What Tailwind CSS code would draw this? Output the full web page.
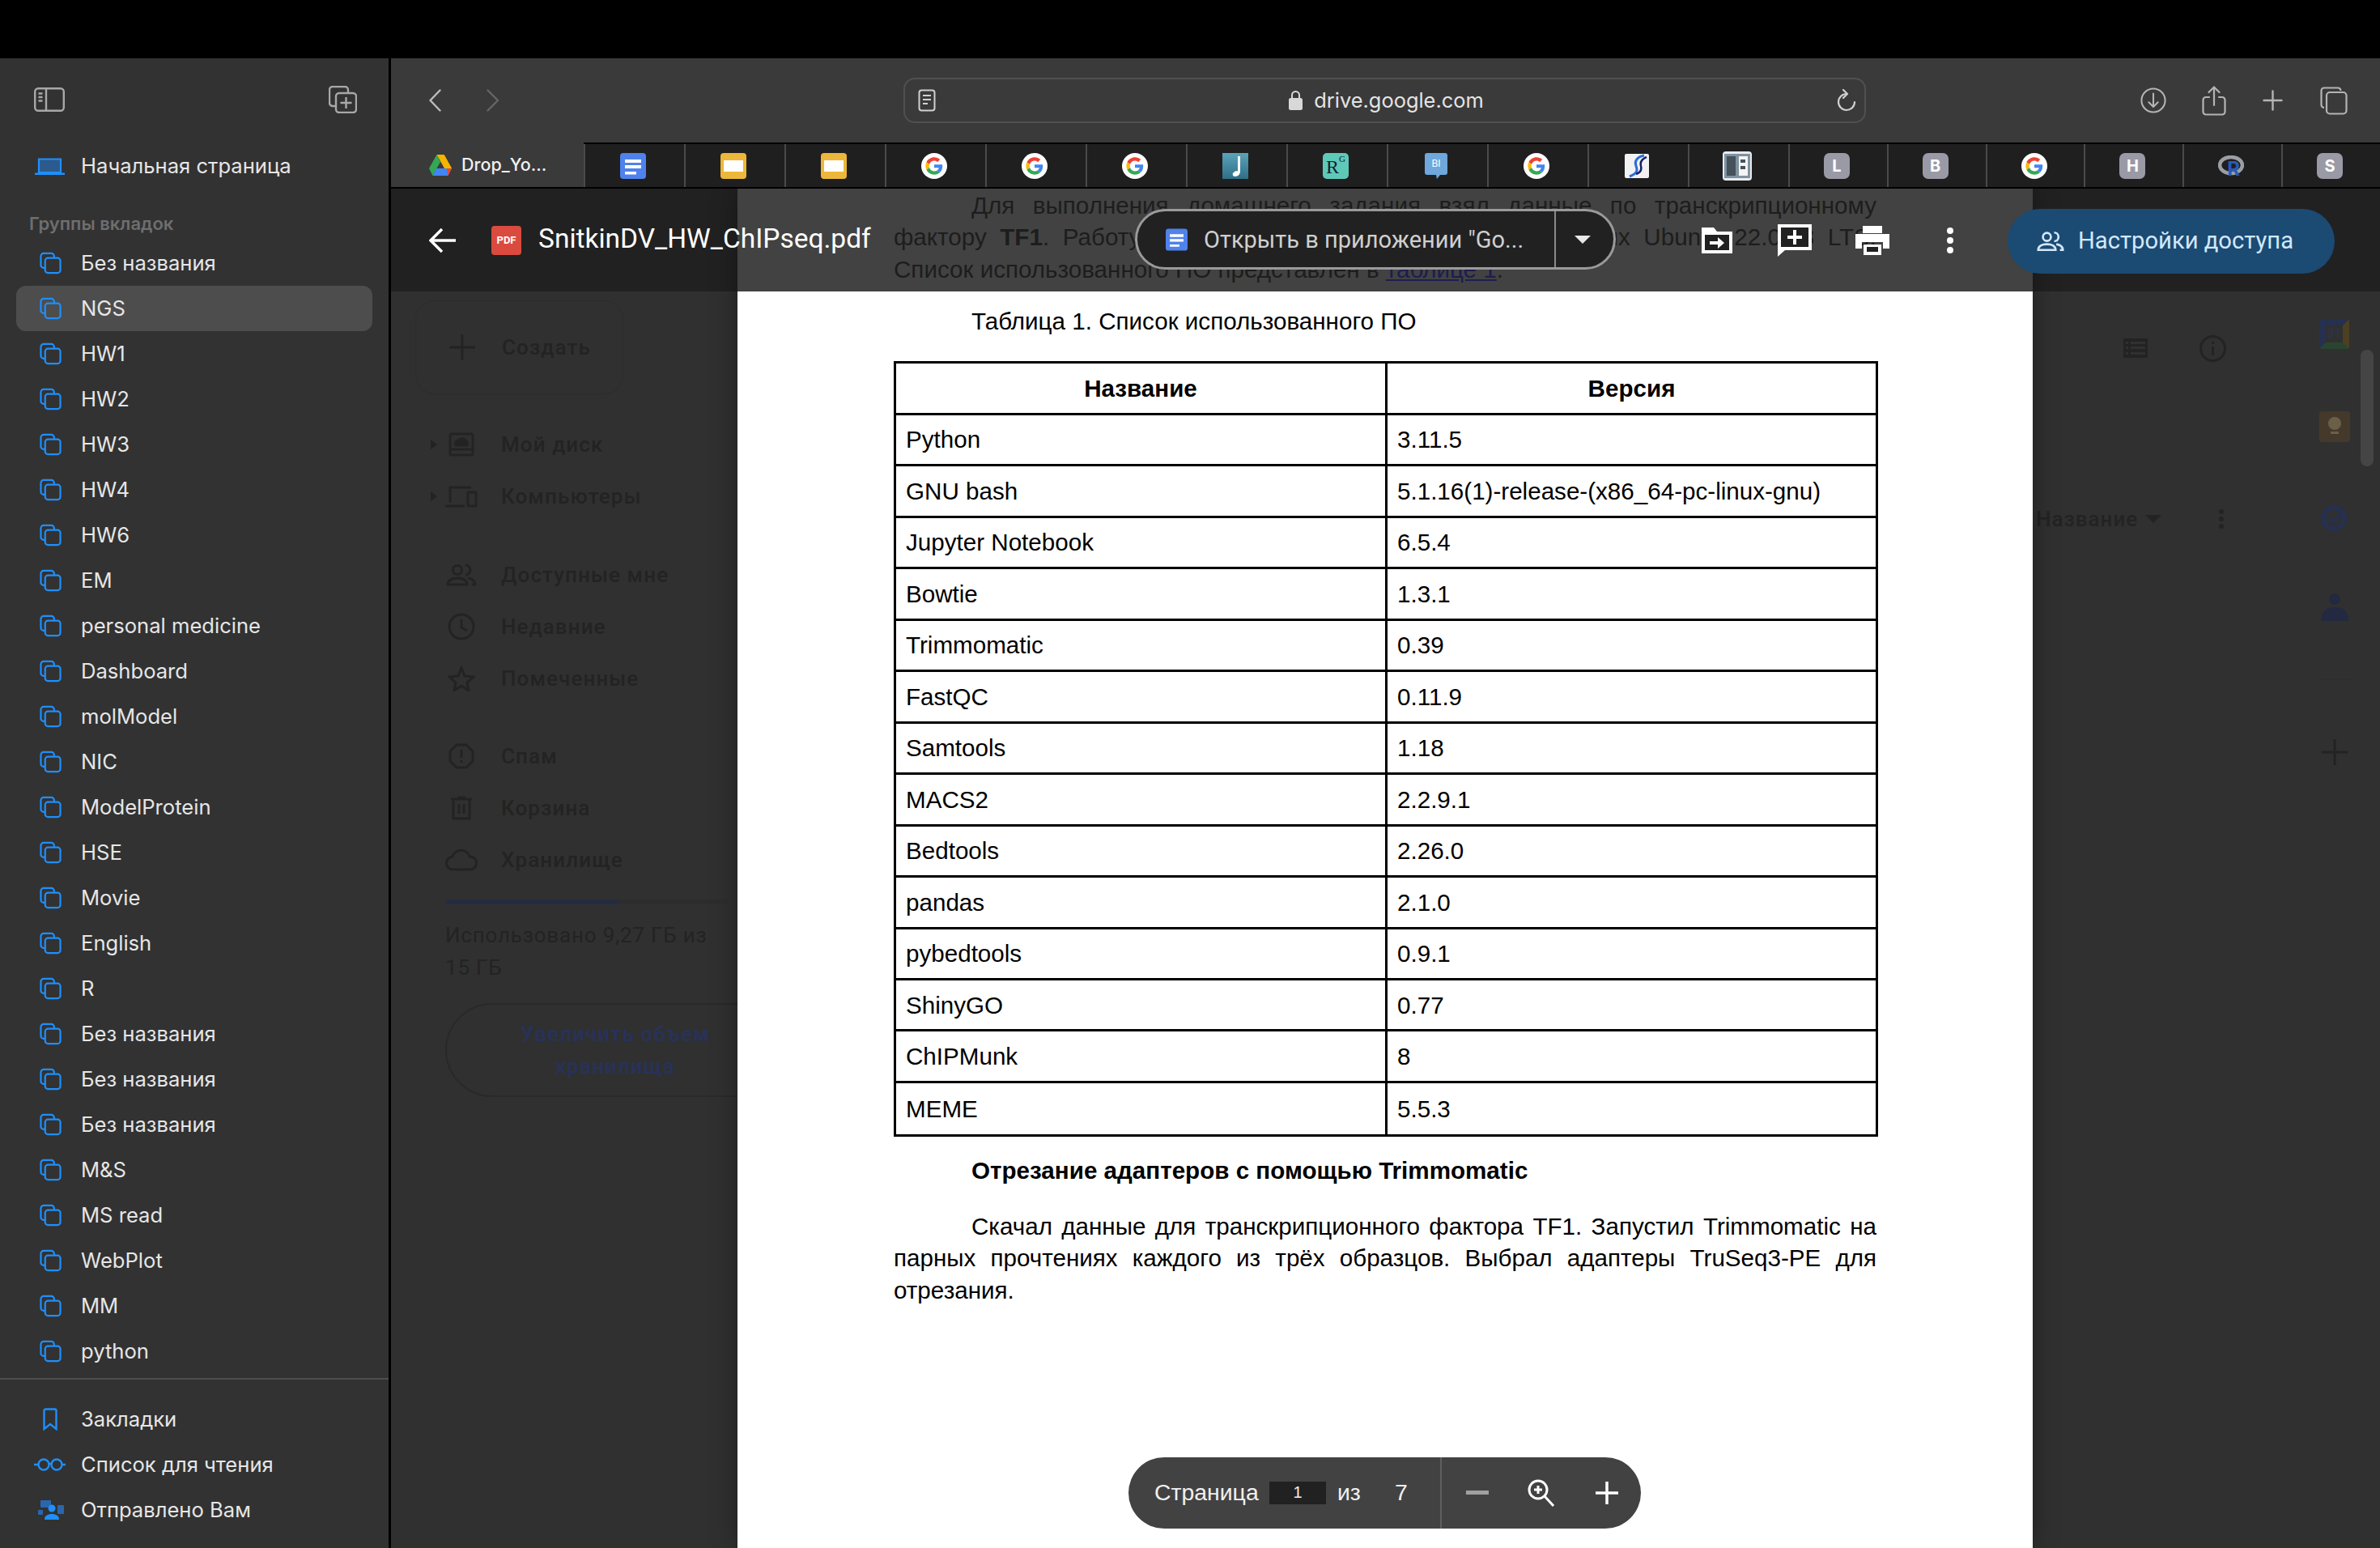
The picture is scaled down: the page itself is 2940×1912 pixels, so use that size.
<!DOCTYPE html><html lang="en">
<head>
  <meta charset="UTF-8" />
  <title>SnitkinDV_HW_ChIPseq.pdf</title>
  <script src="https://cdn.jsdelivr.net/npm/@tailwindcss/browser@4"></script>
</head>
<body class="bg-black h-screen overflow-hidden flex flex-col font-['Inter',sans-serif]">
  <svg class="hidden">
    <symbol id="g" viewBox="-12 -12 72 72">
      <circle cx="24" cy="24" r="36" fill="#fff"/>
      <path fill="#EA4335" d="M24 9.5c3.54 0 6.71 1.22 9.21 3.6l6.85-6.85C35.9 2.38 30.47 0 24 0 14.62 0 6.51 5.38 2.56 13.22l7.98 6.19C12.43 13.72 17.74 9.5 24 9.5z"/>
      <path fill="#4285F4" d="M46.98 24.55c0-1.57-.15-3.09-.38-4.55H24v9.02h12.94c-.58 2.96-2.26 5.48-4.78 7.18l7.73 6c4.51-4.18 7.09-10.36 7.09-17.65z"/>
      <path fill="#FBBC05" d="M10.53 28.59c-.48-1.45-.76-2.99-.76-4.59s.27-3.14.76-4.59l-7.98-6.19C.92 16.46 0 20.12 0 24c0 3.88.92 7.54 2.56 10.78l7.97-6.19z"/>
      <path fill="#34A853" d="M24 48c6.48 0 11.93-2.13 16.02-5.81l-7.73-6c-2.15 1.45-4.92 2.3-8.29 2.3-6.26 0-11.57-4.22-13.47-9.91l-7.98 6.19C6.51 42.62 14.62 48 24 48z"/>
    </symbol>
    <symbol id="docs" viewBox="0 0 32 32">
      <rect width="32" height="32" rx="4" fill="#4f82ec"/>
      <path d="M6 8h20v4H6zM6 15h20v4H6zM6 23h14v3.500H6z" fill="#fff"/>
    </symbol>
    <symbol id="slides" viewBox="0 0 32 32">
      <rect width="32" height="32" rx="4" fill="#ecb73a"/>
      <rect x="4" y="9" width="24" height="14" fill="#fff"/>
    </symbol>
    <symbol id="group" viewBox="0 0 28 28">
      <path d="M7 20H5a3.500 3.500 0 0 1-3.500-3.500V5A3.500 3.500 0 0 1 5 1.500h10A3.500 3.500 0 0 1 18.500 5v2" fill="none" stroke="currentColor" stroke-width="2.300"/>
      <rect x="7" y="7.500" width="19.500" height="19" rx="3.500" fill="none" stroke="currentColor" stroke-width="2.300"/>
    </symbol>
  </svg>

  <!-- black strip above the window -->
  <div class="h-[72px] shrink-0 bg-black"></div>

  <div class="flex-1 flex min-h-0">
    <!-- Safari sidebar -->
    <aside class="w-[480px] shrink-0 bg-[#323232] flex flex-col text-[25.6px] text-[#e6e6e6]">
      <div class="flex justify-between pt-[34px] pl-[42px] pr-[39px] h-[68px]">
        <svg class="mt-[2px] w-[38px] h-[30px] text-[#a8a8a8]" viewBox="0 0 38 30" fill="none" stroke="currentColor" stroke-width="2.400">
          <rect x="1.200" y="1.200" width="35.600" height="27.600" rx="4"/>
          <path d="M15 1.200v27.600M5.500 7.500h5M5.500 12h5M5.500 16.500h5"/>
        </svg>
        <svg class="w-[35px] h-[34px] text-[#a8a8a8]" viewBox="0 0 35 34" fill="none" stroke="currentColor" stroke-width="2.400">
          <path d="M8 25H5a4 4 0 0 1-4-4V5a4 4 0 0 1 4-4h15a4 4 0 0 1 4 4v4"/>
          <rect x="9" y="9" width="25" height="24" rx="4"/>
          <path d="M21.500 14v14M14.500 21h14"/>
        </svg>
      </div>
      <div class="mt-[37px] h-[56px] flex items-center pl-[43px]">
        <svg class="w-[37px] h-[21px] shrink-0" viewBox="0 0 37 21">
          <path d="M5 1.500h27V18H5z" fill="#2c5a8c" stroke="#1e8ffb" stroke-width="2.200"/>
          <path d="M0 18.500h37V21H0z" fill="#1e8ffb"/>
        </svg>
        <span class="ml-[20px]">Начальная страница</span>
      </div>
      <div class="mt-[28px] h-[30px] leading-[30px] pl-[36px] text-[22px] font-semibold text-[#6e6e6e]">Группы вкладок</div>
      <div id="groups" class="mt-[6px] mx-[20px]"></div>
      <div class="mt-[5px] h-[2px] bg-[#4e4e4e]"></div>
      <div class="mt-[21px] flex flex-col">
        <div class="h-[56px] flex items-center pl-[53px]">
          <svg class="w-[18px] h-[28px] shrink-0" viewBox="0 0 18 28" fill="none" stroke="#1e8ffb" stroke-width="2.400"><path d="M1.500 26V3.500a2 2 0 0 1 2-2h11a2 2 0 0 1 2 2V26L9 20z"/></svg>
          <span class="ml-[29px]">Закладки</span>
        </div>
        <div class="h-[56px] flex items-center pl-[42px]">
          <svg class="w-[39px] h-[16px] shrink-0" viewBox="0 0 39 16" fill="none" stroke="#1e8ffb" stroke-width="2.400"><circle cx="12" cy="8" r="6.500"/><circle cx="28" cy="8" r="6.500"/><path d="M18.500 7h3M0 8h5.500M34 8h5"/></svg>
          <span class="ml-[19px]">Список для чтения</span>
        </div>
        <div class="h-[56px] flex items-center pl-[47px]">
          <svg class="w-[32px] h-[24px] shrink-0" viewBox="0 0 32 24">
            <rect x="3" y="0" width="13" height="9" rx="1" fill="#2a66ad"/><rect x="24" y="6" width="8" height="11" rx="1" fill="#2a66ad"/><rect x="0" y="12" width="6" height="6" rx="1" fill="#2a66ad"/>
            <circle cx="17" cy="10" r="4.500" fill="#1e8ffb"/><path d="M8 24c0-5 4-7 9-7s9 2 9 7z" fill="#1e8ffb"/>
          </svg>
          <span class="ml-[21px]">Отправлено Вам</span>
        </div>
      </div>
    </aside>
    <div class="w-[3px] shrink-0 bg-black"></div>

    <div class="flex-1 min-w-0 flex flex-col">
      <!-- Safari toolbar -->
      <div class="h-[104px] shrink-0 bg-[#3a3a3a] flex items-center pl-[47px] text-[#b4b4b4]">
        <svg class="w-[15px] h-[28px] shrink-0" viewBox="0 0 15 28" fill="none" stroke="#bdbdbd" stroke-width="2.400" stroke-linecap="round" stroke-linejoin="round"><path d="M13.500 1.500 1.500 14l12 12.500"/></svg>
        <svg class="ml-[56px] w-[16px] h-[28px] shrink-0" viewBox="0 0 16 28" fill="none" stroke="#666" stroke-width="2.400" stroke-linecap="round" stroke-linejoin="round"><path d="M1.500 1.500 14 14 1.500 26.500"/></svg>
        <div class="ml-[499px] w-[1189px] h-[56px] shrink-0 rounded-[14px] border-2 border-[#505050] flex items-center pl-[16px] pr-[10px]">
          <svg class="w-[22px] h-[28px] shrink-0" viewBox="0 0 22 28" fill="none" stroke="#d0d0d0" stroke-width="2"><rect x="1.500" y="1.500" width="19" height="25" rx="3"/><path d="M6 8h10M6 13h10M6 18h6"/></svg>
          <div class="flex-1 flex items-center justify-center">
            <svg class="w-[17px] h-[25px] shrink-0" viewBox="0 0 17 25"><path d="M4 11V6.500a4.500 4.500 0 0 1 9 0V11" fill="none" stroke="#d8d8d8" stroke-width="2"/><rect y="10" width="17" height="15" rx="2.500" fill="#d8d8d8"/></svg>
            <span class="ml-[14px] text-[25.400px] text-[#e4e4e4]">drive.google.com</span>
          </div>
          <svg class="w-[24px] h-[28px] shrink-0" viewBox="0 0 24 28" fill="none" stroke="#d0d0d0" stroke-width="2.200" stroke-linecap="round" stroke-linejoin="round"><path d="M12 6A10 10 0 1 0 22 16"/><path d="M8 1l5 5-5 5"/></svg>
        </div>
        <svg class="ml-[339px] w-[32px] h-[34px] shrink-0" viewBox="0 0 34 34" fill="none" stroke="currentColor" stroke-width="2.200" stroke-linecap="round" stroke-linejoin="round"><circle cx="17" cy="17" r="15.500"/><path d="M17 8v17M11 19.500l6 6 6-6"/></svg>
        <svg class="ml-[44px] w-[30px] h-[37px] shrink-0" viewBox="0 0 30 37" fill="none" stroke="currentColor" stroke-width="2.200" stroke-linecap="round" stroke-linejoin="round"><path d="M9 14H5a3.500 3.500 0 0 0-3.500 3.500V32A3.500 3.500 0 0 0 5 35.500h20a3.500 3.500 0 0 0 3.500-3.500V17.500A3.500 3.500 0 0 0 25 14h-4"/><path d="M15 24V1.500M8.500 8 15 1.500 21.500 8"/></svg>
        <svg class="ml-[45px] w-[25px] h-[26px] shrink-0" viewBox="0 0 25 26" fill="none" stroke="currentColor" stroke-width="2.400" stroke-linecap="round"><path d="M12.500 1.500v23M1.500 13h22"/></svg>
        <svg class="ml-[46px] w-[34px] h-[35px] shrink-0" viewBox="0 0 34 35" fill="none" stroke="currentColor" stroke-width="2.200"><path d="M5 26a3.500 3.500 0 0 1-3.500-3.500V5A3.500 3.500 0 0 1 5 1.500h17A3.500 3.500 0 0 1 25.500 5"/><rect x="8" y="7" width="24.500" height="26.500" rx="4"/></svg>
      </div>

      <!-- Safari tab bar -->
      <div class="h-[57px] shrink-0 flex border-b-2 border-black">
        <div class="w-[238px] shrink-0 bg-[#3a3a3a] flex items-center pl-[47px]">
          <svg class="w-[28px] h-[26px] shrink-0" viewBox="0 0 28 26">
            <path d="M9.500 0h9L28 17h-9z" fill="#f4b400"/><path d="M9.500 0 0 17l4.500 9L14 9z" fill="#34a853"/><path d="M4.500 26h19L28 17H9z" fill="#4285f4"/><path d="M18.500 0H14l5 17h9z" fill="#f4b400"/><path d="M23.500 26 28 17h-6z" fill="#ea4335"/>
          </svg>
          <span class="ml-[12px] text-[21.500px] font-medium text-[#f0f0f0] whitespace-nowrap">Drop_Yo...</span>
        </div>
        <div class="flex-1 flex border-t-2 border-black bg-[#1f1f1f]">
          <div class="w-[124px] shrink-0 pr-[4px] flex items-center justify-center border-l-2 border-[#4a4a4a]"><svg class="w-[32px] h-[32px]"><use href="#docs"/></svg></div>
          <div class="w-[124px] shrink-0 pr-[4px] flex items-center justify-center border-l-2 border-[#4a4a4a]"><svg class="w-[32px] h-[32px]"><use href="#slides"/></svg></div>
          <div class="w-[124px] shrink-0 pr-[4px] flex items-center justify-center border-l-2 border-[#4a4a4a]"><svg class="w-[32px] h-[32px]"><use href="#slides"/></svg></div>
          <div class="w-[124px] shrink-0 pr-[4px] flex items-center justify-center border-l-2 border-[#4a4a4a]"><svg class="w-[32px] h-[32px]"><use href="#g"/></svg></div>
          <div class="w-[124px] shrink-0 pr-[4px] flex items-center justify-center border-l-2 border-[#4a4a4a]"><svg class="w-[32px] h-[32px]"><use href="#g"/></svg></div>
          <div class="w-[124px] shrink-0 pr-[4px] flex items-center justify-center border-l-2 border-[#4a4a4a]"><svg class="w-[32px] h-[32px]"><use href="#g"/></svg></div>
          <div class="w-[124px] shrink-0 pr-[4px] flex items-center justify-center border-l-2 border-[#4a4a4a]">
            <svg class="w-[32px] h-[32px]" viewBox="0 0 32 32"><defs><linearGradient id="m" x1="0" y1="0" x2="0" y2="1"><stop offset="0" stop-color="#5ba3bb"/><stop offset="1" stop-color="#2f6f86"/></linearGradient></defs><rect width="32" height="32" fill="url(#m)"/><path d="M19 4h3v19c0 3-3 6-6 6-2.500 0-4-1.500-3-4 1-2 4-3 6-2.500z" fill="#fff"/></svg>
          </div>
          <div class="w-[124px] shrink-0 pr-[4px] flex items-center justify-center border-l-2 border-[#4a4a4a]">
            <div class="w-[32px] h-[32px] rounded-[5px] bg-[#5fc9b8] flex justify-center text-[#123] font-['Liberation_Serif',serif] text-[24px] leading-[34px]">R<span class="text-[11px] leading-[14px]">G</span></div>
          </div>
          <div class="w-[124px] shrink-0 pr-[4px] flex items-center justify-center border-l-2 border-[#4a4a4a] relative">
            <svg class="w-[28px] h-[32px] absolute" viewBox="0 0 28 32"><path d="M3 0h22a3 3 0 0 1 3 3v21a3 3 0 0 1-3 3h-6l-4 5-1-5H3a3 3 0 0 1-3-3V3a3 3 0 0 1 3-3z" fill="#6ea8dc"/></svg>
            <span class="relative text-[12px] text-white -mt-[6px]">BI</span>
          </div>
          <div class="w-[124px] shrink-0 pr-[4px] flex items-center justify-center border-l-2 border-[#4a4a4a]"><svg class="w-[32px] h-[32px]"><use href="#g"/></svg></div>
          <div class="w-[124px] shrink-0 pr-[4px] flex items-center justify-center border-l-2 border-[#4a4a4a]">
            <svg class="w-[30px] h-[30px]" viewBox="0 0 30 30"><rect width="30" height="30" rx="2" fill="#f2f2f2"/><path d="M24 2C14 4 12 10 14 15s2 9-8 13" fill="none" stroke="#2b6fd6" stroke-width="3"/><path d="M27 4c-7 3-8 7-7 11s0 8-6 10" fill="none" stroke="#17206e" stroke-width="2.500"/></svg>
          </div>
          <div class="w-[124px] shrink-0 pr-[4px] flex items-center justify-center border-l-2 border-[#4a4a4a]">
            <svg class="w-[36px] h-[36px]" viewBox="0 0 36 36"><rect width="36" height="36" rx="4" fill="#e8ecef"/><rect x="2" y="3" width="32" height="30" fill="#7f929f"/><rect x="5" y="6" width="11" height="24" fill="#44525c"/><rect x="20" y="6" width="11" height="24" fill="#f4f4f4"/><path d="M22 10h6v4h-6zM22 18h6v4h-6zM8 10h5v4H8zM8 18h5v4H8z" fill="#44525c"/></svg>
          </div>
          <div class="flex-1 basis-0 pr-[4px] flex items-center justify-center border-l-2 border-[#4a4a4a]"><span class="w-[32px] h-[32px] rounded-[7px] bg-[#9a9aa6] flex items-center justify-center text-white text-[20px] font-bold">L</span></div>
          <div class="flex-1 basis-0 pr-[4px] flex items-center justify-center border-l-2 border-[#4a4a4a]"><span class="w-[32px] h-[32px] rounded-[7px] bg-[#9a9aa6] flex items-center justify-center text-white text-[20px] font-bold">B</span></div>
          <div class="flex-1 basis-0 pr-[4px] flex items-center justify-center border-l-2 border-[#4a4a4a]"><svg class="w-[32px] h-[32px]"><use href="#g"/></svg></div>
          <div class="flex-1 basis-0 pr-[4px] flex items-center justify-center border-l-2 border-[#4a4a4a]"><span class="w-[32px] h-[32px] rounded-[7px] bg-[#9a9aa6] flex items-center justify-center text-white text-[20px] font-bold">H</span></div>
          <div class="flex-1 basis-0 pr-[4px] flex items-center justify-center border-l-2 border-[#4a4a4a] relative">
            <svg class="w-[32px] h-[26px] absolute" viewBox="0 0 32 26"><ellipse cx="16" cy="12" rx="14" ry="10" fill="none" stroke="#9b9ea3" stroke-width="4.500"/></svg>
            <span class="relative text-[24px] leading-[24px] font-bold text-[#2a5bb5] mt-[8px] ml-[6px]">R</span>
          </div>
          <div class="flex-1 basis-0 pr-[4px] flex items-center justify-center border-l-2 border-[#4a4a4a]"><span class="w-[32px] h-[32px] rounded-[7px] bg-[#9a9aa6] flex items-center justify-center text-white text-[20px] font-bold">S</span></div>
        </div>
      </div>

      <!-- Drive page, dimmed behind the PDF preview -->
      <div class="relative flex-1 min-h-0 overflow-hidden bg-[#303030] flex flex-col">
        <div class="h-[127px] shrink-0 bg-[#212121]"></div>
        <div class="flex-1 flex min-h-0 font-['Roboto',sans-serif] text-[26px] font-medium tracking-[1.100px] text-[#232323]">
          <nav class="pt-[11px]">
            <div class="ml-[30px] w-[257px] h-[116px] rounded-[24px] border border-[#2c2c2c] flex items-center pl-[40px]">
              <svg class="w-[34px] h-[34px] shrink-0" viewBox="0 0 34 34" fill="none" stroke="#232323" stroke-width="3"><path d="M17 1v32M1 17h32"/></svg>
              <span class="ml-[32px]">Создать</span>
            </div>
            <div class="mt-[30px]">
              <div class="h-[64px] flex items-center pl-[48px]">
                <svg class="w-[12px] h-[12px] shrink-0" viewBox="0 0 12 12"><path d="M1 0l8 6-8 6z" fill="#232323"/></svg>
                <div class="w-[54px] flex justify-center"><svg class="w-[32px] h-[32px]" viewBox="0 0 32 32" fill="none" stroke="#232323" stroke-width="3"><rect x="2" y="3" width="28" height="26" rx="2"/><path d="M2 22h28" /><path d="M9 17a4 4 0 0 1 3-6 6 6 0 0 1 10 1 3 3 0 0 1 1 5z" fill="#232323"/></svg></div>
                <span class="ml-[22px]">Мой диск</span>
              </div>
              <div class="h-[64px] flex items-center pl-[48px]">
                <svg class="w-[12px] h-[12px] shrink-0" viewBox="0 0 12 12"><path d="M1 0l8 6-8 6z" fill="#232323"/></svg>
                <div class="w-[54px] flex justify-center"><svg class="w-[40px] h-[28px]" viewBox="0 0 40 28" fill="none" stroke="#232323" stroke-width="3"><path d="M6 22V3h26M0 26h24"/><rect x="28" y="9" width="10" height="17" rx="1"/></svg></div>
                <span class="ml-[22px]">Компьютеры</span>
              </div>
            </div>
            <div class="mt-[33px]">
              <div class="h-[64px] flex items-center pl-[60px]">
                <div class="w-[54px] flex justify-center"><svg class="w-[38px] h-[28px]" viewBox="0 0 38 28" fill="none" stroke="#232323" stroke-width="3"><circle cx="14" cy="8" r="5.500"/><path d="M2 26c0-5 5-8 12-8s12 3 12 8z"/><path d="M24 2a6 6 0 0 1 0 12M32 26h4c0-4-3-7-9-8"/></svg></div>
                <span class="ml-[22px]">Доступные мне</span>
              </div>
              <div class="h-[64px] flex items-center pl-[60px]">
                <div class="w-[54px] flex justify-center"><svg class="w-[34px] h-[34px]" viewBox="0 0 34 34" fill="none" stroke="#232323" stroke-width="3"><circle cx="17" cy="17" r="15"/><path d="M17 8v10l7 4"/></svg></div>
                <span class="ml-[22px]">Недавние</span>
              </div>
              <div class="h-[64px] flex items-center pl-[60px]">
                <div class="w-[54px] flex justify-center"><svg class="w-[34px] h-[32px]" viewBox="0 0 34 32" fill="none" stroke="#232323" stroke-width="3"><path d="M17 3l4 10 11 1-8 7 2 10-9-6-9 6 2-10-8-7 11-1z"/></svg></div>
                <span class="ml-[22px]">Помеченные</span>
              </div>
            </div>
            <div class="mt-[32px]">
              <div class="h-[64px] flex items-center pl-[60px]">
                <div class="w-[54px] flex justify-center"><svg class="w-[32px] h-[32px]" viewBox="0 0 32 32" fill="none" stroke="#232323" stroke-width="3"><path d="M10 2h12l8 8v12l-8 8H10l-8-8V10z"/><path d="M16 8v10M16 21v3"/></svg></div>
                <span class="ml-[22px]">Спам</span>
              </div>
              <div class="h-[64px] flex items-center pl-[60px]">
                <div class="w-[54px] flex justify-center"><svg class="w-[26px] h-[30px]" viewBox="0 0 26 30" fill="none" stroke="#232323" stroke-width="3"><path d="M0 4h26M8 2h10M3 4v24h20V4M10 10v12M16 10v12"/></svg></div>
                <span class="ml-[22px]">Корзина</span>
              </div>
              <div class="h-[64px] flex items-center pl-[60px]">
                <div class="w-[54px] flex justify-center"><svg class="w-[40px] h-[28px]" viewBox="0 0 40 28" fill="none" stroke="#232323" stroke-width="3"><path d="M10 26a8 8 0 0 1-1-16 11 11 0 0 1 21 0 8 8 0 0 1 1 16z"/></svg></div>
                <span class="ml-[22px]">Хранилище</span>
              </div>
            </div>
            <div class="mt-[17px] ml-[67px] w-[350px] h-[6px] rounded-full bg-[#2d2d2d]"><div class="w-[214px] h-[6px] rounded-full bg-[#252c42]"></div></div>
            <div class="mt-[18px] ml-[67px] w-[360px] leading-[40px] font-normal tracking-[0.800px]">Использовано 9,27 ГБ из<br>15 ГБ</div>
            <div class="mt-[24px] ml-[67px] w-[420px] h-[116px] rounded-[58px] border-2 border-[#292929] flex items-center justify-center text-center font-semibold leading-[40px] text-[#283258]">Увеличить объем<br>хранилища</div>
          </nav>

          <div class="ml-auto w-[245px] pt-[50px]">
            <div class="h-[40px] flex items-center pl-[108px]">
              <svg class="w-[30px] h-[24px]" viewBox="0 0 30 24"><rect width="30" height="24" fill="#232323"/><path d="M3 4h3v3H3zM9 4h18v3H9zM3 10h3v3H3zM9 10h18v3H9zM3 17h3v3H3zM9 17h18v3H9z" fill="#303030"/></svg>
              <svg class="ml-[64px] w-[33px] h-[33px]" viewBox="0 0 33 33" fill="none" stroke="#232323" stroke-width="3"><circle cx="16.500" cy="16.500" r="15"/><path d="M16.500 14v11M16.500 8v3"/></svg>
            </div>
            <div class="mt-[171px] h-[40px] flex items-center">
              <span class="w-[120px] whitespace-nowrap tracking-[1px]">Название</span>
              <svg class="ml-[15px] w-[20px] h-[10px]" viewBox="0 0 20 10"><path d="M0 0h20L10 10z" fill="#232323"/></svg>
              <svg class="ml-[71px] w-[6px] h-[24px]" viewBox="0 0 6 24" fill="#232323"><circle cx="3" cy="3" r="3"/><circle cx="3" cy="12" r="3"/><circle cx="3" cy="21" r="3"/></svg>
            </div>
          </div>

          <div class="ml-[105px] w-[37px] pt-[34px] flex flex-col items-center">
            <div class="w-[37px] h-[37px] shrink-0 rounded-[2px] border-[8px] border-t-[#26304f] border-l-[#26304f] border-r-[#4d3f22] border-b-[#2a4430] flex items-center justify-center text-[15px] tracking-normal text-[#2a3350]">31</div>
            <svg class="mt-[77px] w-[38px] h-[38px] shrink-0" viewBox="0 0 38 38"><rect width="38" height="38" rx="3" fill="#44392a"/><circle cx="19" cy="15" r="8" fill="#6a5f47"/><rect x="14" y="25" width="10" height="3" fill="#6a5f47"/></svg>
            <svg class="mt-[75px] w-[36px] h-[36px] shrink-0" viewBox="0 0 36 36" fill="none"><circle cx="17" cy="19" r="13" stroke="#26304f" stroke-width="6"/><path d="M10 18l6 6 10-11" stroke="#26304f" stroke-width="4"/></svg>
            <svg class="mt-[76px] w-[34px] h-[34px] shrink-0" viewBox="0 0 34 34" fill="#222940"><circle cx="17" cy="7" r="7"/><path d="M0 34c0-12 6-17 17-17s17 5 17 17z"/></svg>
            <div class="mt-[72px] w-[48px] h-[1px] shrink-0 bg-[#2d2d2d]"></div>
            <svg class="mt-[72px] w-[34px] h-[34px] shrink-0" viewBox="0 0 34 34" fill="none" stroke="#232323" stroke-width="3"><path d="M17 1v32M1 17h32"/></svg>
          </div>
          <div class="ml-[14px] mr-[8px] mt-[72px] w-[16px] h-[144px] rounded-full bg-[#444544]"></div>
        </div>

        <!-- PDF page lying over the Drive page -->
        <div class="absolute top-0 bottom-0 left-[428px] w-[1600px] bg-white shadow-[0_0_30px_rgba(0,0,0,0.35)] font-['Liberation_Sans',sans-serif] text-[29.600px] leading-[39.400px] text-black">
          <div class="h-[127px] overflow-hidden bg-[#424242] text-[#1d1d1d] px-[193px] pt-[1px]">
            <div class="indent-[96px] [text-align-last:justify]">Для выполнения домашнего задания взял данные по транскрипционному</div>
            <div class="[text-align-last:justify]">фактору <b>TF1</b>. Работу выполнял на ноутбуке с системой Linux Ubuntu 22.04.3 LTS.</div>
            <div>Список использованного ПО представлен в <span class="text-[#1d1d50] underline">таблице 1</span>.</div>
          </div>
          <div class="px-[193px]">
            <p class="mt-[17px] pl-[96px]">Таблица 1. Список использованного ПО</p>
            <div id="table" class="mt-[30px] w-[1216px] h-[958px] border-[3px] border-black grid grid-cols-[607px_1fr] grid-rows-[repeat(15,1fr)]"></div>
            <p class="mt-[22px] pl-[96px] font-bold">Отрезание адаптеров с помощью Trimmomatic</p>
            <p class="mt-[29px] indent-[96px] [text-align-last:justify]">Скачал данные для транскрипционного фактора TF1. Запустил Trimmomatic на</p>
            <p class="[text-align-last:justify]">парных прочтениях каждого из трёх образцов. Выбрал адаптеры TruSeq3-PE для</p>
            <p>отрезания.</p>
          </div>
          <!-- page controls -->
          <div class="absolute left-[483px] bottom-[24px] w-[633px] h-[88px] rounded-full bg-[#424242] flex items-center pl-[32px] text-[28.400px] text-[#f0f0f0]">
            <span class="w-[128px] whitespace-nowrap">Страница</span>
            <span class="ml-[14px] w-[70px] h-[28px] bg-[#212121] flex items-center justify-center text-[20px]">1</span>
            <span class="ml-[14px] w-[30px]">из</span>
            <span class="ml-[41px] w-[13px]">7</span>
            <div class="ml-[43px] w-[2px] h-[88px] bg-[#5f5f5f]"></div>
            <svg class="ml-[30px] w-[28px] h-[6px]" viewBox="0 0 28 6"><rect width="28" height="5" fill="#a0a0a0"/></svg>
            <svg class="ml-[48px] w-[34px] h-[34px]" viewBox="0 0 34 34" fill="none" stroke="#fff" stroke-width="3"><circle cx="13" cy="13" r="11"/><path d="M21 21l11 12M13 8v10M8 13h10"/></svg>
            <svg class="ml-[50px] w-[28px] h-[28px]" viewBox="0 0 28 28" fill="none" stroke="#fff" stroke-width="3.500"><path d="M14 0v28M0 14h28"/></svg>
          </div>
        </div>

        <!-- Drive preview header controls -->
        <div class="absolute top-0 left-0 right-0 h-[127px] flex items-center pl-[47px] font-['Roboto',sans-serif]">
          <svg class="w-[33px] h-[32px] shrink-0" viewBox="0 0 33 32" fill="none" stroke="#fff" stroke-width="3.400"><path d="M16 2 2 16l14 14M2 16h31"/></svg>
          <div class="ml-[44px] w-[37px] h-[36px] shrink-0 rounded-[4px] bg-[#db4a3e] flex items-center justify-center text-[13px] font-bold text-white">PDF</div>
          <span class="ml-[21px] w-[411px] shrink-0 whitespace-nowrap text-[33.500px] text-white -mt-[2px]">SnitkinDV_HW_ChIPseq.pdf</span>
          <div class="ml-[326px] w-[594px] h-[75px] shrink-0 rounded-full border-[3px] border-[#9a9a9a] bg-[#212121] flex items-center pl-[35px] -mt-[2px]">
            <svg class="w-[27px] h-[28px] shrink-0"><use href="#docs"/></svg>
            <span class="ml-[20px] mt-[3px] w-[393px] whitespace-nowrap text-[29px] text-[#cfcfcf]">Открыть в приложении "Go...</span>
            <div class="ml-[40px] w-[2px] h-[69px] bg-[#8a8a8a]"></div>
            <svg class="ml-[23px] w-[20px] h-[10px]" viewBox="0 0 20 10"><path d="M0 0h20L10 10z" fill="#e8e8e8"/></svg>
          </div>
          <svg class="ml-[106px] w-[38px] h-[32px] shrink-0" viewBox="0 0 38 32"><path d="M0 0h15l4 5h19v27H0z" fill="#fff"/><rect x="4" y="9" width="30" height="19" fill="#212121"/><path d="M10 17h10v-5l8 7-8 7v-5H10z" fill="#fff"/></svg>
          <svg class="ml-[56px] w-[42px] h-[40px] shrink-0" viewBox="0 0 42 40"><path d="M0 0h42v32H9l-9 8z" fill="#fff"/><path d="M4 4h34v24H4z" fill="#212121"/><path d="M19 7h4v7h7v4h-7v7h-4v-7h-7v-4h7z" fill="#fff"/></svg>
          <svg class="ml-[54px] w-[42px] h-[36px] shrink-0" viewBox="0 0 42 36"><path d="M9 0h24v9H9zM0 10h42v18h-8v-8H8v8H0z" fill="#fff"/><path d="M10 23h22v13H10z" fill="#fff"/><path d="M14 26h14v6H14z" fill="#212121"/></svg>
          <svg class="ml-[71px] w-[8px] h-[32px] shrink-0" viewBox="0 0 8 32" fill="#fff"><circle cx="4" cy="4" r="4"/><circle cx="4" cy="16" r="4"/><circle cx="4" cy="28" r="4"/></svg>
          <div class="ml-[67px] mt-[2px] w-[404px] h-[80px] shrink-0 rounded-full bg-[#1b4a73] flex items-center pl-[36px] text-[29.200px] text-[#d2e8fb]">
            <svg class="w-[34px] h-[26px] shrink-0" viewBox="0 0 38 28" fill="none" stroke="#d2e8fb" stroke-width="3"><circle cx="14" cy="8" r="5.500"/><path d="M2 26c0-5 5-8 12-8s12 3 12 8z"/><path d="M24 2a6 6 0 0 1 0 12M32 26h4c0-4-3-7-9-8"/></svg>
            <span class="ml-[17px] whitespace-nowrap">Настройки доступа</span>
          </div>
        </div>
      </div>
    </div>
  </div>

  <script>
    // sidebar tab groups
    const groups = ["Без названия","NGS","HW1","HW2","HW3","HW4","HW6","EM","personal medicine","Dashboard","molModel","NIC","ModelProtein","HSE","Movie","English","R","Без названия","Без названия","Без названия","M&S","MS read","WebPlot","MM","python"];
    const groupsEl = document.getElementById("groups");
    groups.forEach((name) => {
      const row = document.createElement("div");
      row.className = "h-[56px] flex items-center pl-[29px] rounded-[12px]" + (name === "NGS" ? " bg-[#4d4d4d]" : "");
      row.innerHTML = '<svg class="w-[27px] h-[28px] shrink-0 text-[#1e8ffb]"><use href="#group"/></svg><span class="ml-[24px]"></span>';
      row.querySelector("span").textContent = name;
      groupsEl.appendChild(row);
    });

    // software table in the PDF
    const rows = [["Название","Версия"],["Python","3.11.5"],["GNU bash","5.1.16(1)-release-(x86_64-pc-linux-gnu)"],["Jupyter Notebook","6.5.4"],["Bowtie","1.3.1"],["Trimmomatic","0.39"],["FastQC","0.11.9"],["Samtools","1.18"],["MACS2","2.2.9.1"],["Bedtools","2.26.0"],["pandas","2.1.0"],["pybedtools","0.9.1"],["ShinyGO","0.77"],["ChIPMunk","8"],["MEME","5.5.3"]];
    const tableEl = document.getElementById("table");
    rows.forEach((row, i) => {
      row.forEach((text, j) => {
        const cell = document.createElement("div");
        cell.className = (i === 0 ? "font-bold justify-center " : "pl-[12px] ") + (j === 0 ? "border-r-[3px] border-black " : "") + (i < rows.length - 1 ? "border-b-[3px] border-black " : "") + "flex items-center";
        cell.textContent = text;
        tableEl.appendChild(cell);
      });
    });
  </script>
</body>
</html>
